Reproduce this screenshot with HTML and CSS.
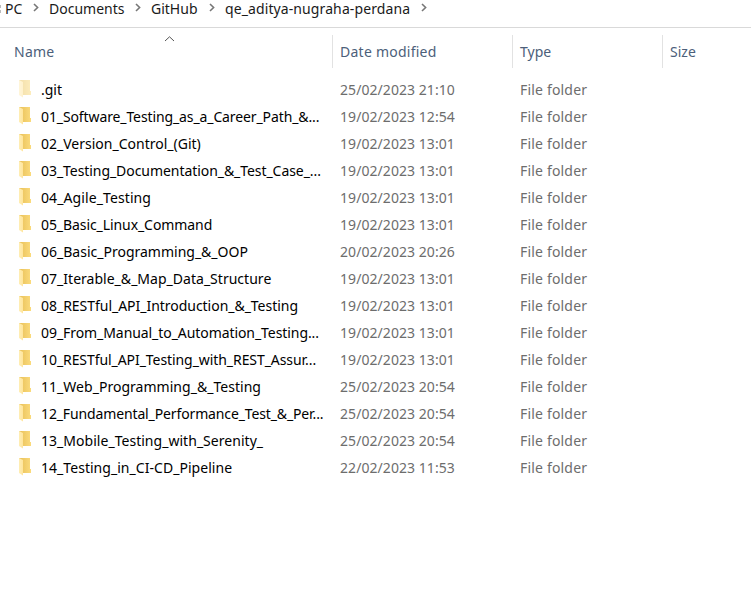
FILE: index.html
```
<!DOCTYPE html>
<html lang="en">
<head>
<meta charset="utf-8">
<title>qe_aditya-nugraha-perdana</title>
<link rel="stylesheet" href="styles.css">
</head>
<body>
<svg class="defs" aria-hidden="true">
  <defs>
    <linearGradient id="front" x1="0" x2="1"><stop offset="0" stop-color="#ffeeb5"/><stop offset="1" stop-color="#ffe59c"/></linearGradient>
    <linearGradient id="back" x1="0" x2="1"><stop offset="0.2" stop-color="#ecc55f"/><stop offset="1" stop-color="#fbdb7c"/></linearGradient>
    <symbol id="folder" viewBox="0 0 12 18">
      <path d="M0 0h11v11h1v4H0z" fill="url(#back)"/>
      <path d="M0 0l4 2v15.5L0 15z" fill="url(#front)"/>
    </symbol>
    <symbol id="chevron" viewBox="0 0 6 9"><path d="M1 1l3.6 3.5L1 8" fill="none" stroke="#777" stroke-width="1.6"/></symbol>
  </defs>
</svg>
<nav class="path">
  <span class="mark"></span>
  <span class="crumb pc">PC</span><svg class="chev"><use href="#chevron"/></svg>
  <span class="crumb documents">Documents</span><svg class="chev"><use href="#chevron"/></svg>
  <span class="crumb github">GitHub</span><svg class="chev"><use href="#chevron"/></svg>
  <span class="crumb repo">qe_aditya-nugraha-perdana</span><svg class="chev"><use href="#chevron"/></svg>
</nav>
<header class="columns">
  <div class="col first">Name<svg class="sort" viewBox="0 0 11 6"><path d="M1 5l4.5-4.2L10 5" fill="none" stroke="#555" stroke-width="1"/></svg></div>
  <div class="col date-head">Date modified</div>
  <div class="col">Type</div>
  <div class="col">Size</div>
</header>
<main class="files" id="files"></main>
<script src="files.js"></script>
</body>
</html>
```
FILE: styles.css
```
body {
  margin: 0;
  width: 751px;
  height: 612px;
  overflow: hidden;
  background: #fff;
  font: 14px/27px "Noto Sans", "Open Sans", sans-serif;
  color: #111;
}
.defs { position: absolute; width: 0; height: 0; }
.path {
  box-sizing: border-box;
  height: 28px;
  display: flex;
  align-items: flex-start;
  border-bottom: 1px solid #d9d9d9;
  white-space: nowrap;
}
.mark {
  width: 1px;
  height: 8px;
  margin: 5px 4px 0 0;
  background: linear-gradient(#bbb 3px, transparent 3px 5px, #bbb 5px);
}
.crumb { line-height: 18px; color: #1a1a1a; flex: none; }
.pc { width: 28px; }
.documents { width: 86px; }
.github { width: 58px; }
.repo { width: 196px; letter-spacing: .1px; }
.chev { width: 6px; height: 9px; margin: 3px 10px 0 0; flex: none; }
.columns {
  display: grid;
  grid-template-columns: 332px 180px 150px 89px;
  height: 32px;
  margin-top: 7px;
  line-height: 33px;
  color: #4c607a;
}
.col { border-left: 1px solid #e2e2e2; padding-left: 7px; }
.first { border: 0; padding-left: 14px; display: flex; }
.first, .date-head { letter-spacing: .25px; }
.sort { width: 11px; height: 6px; margin: 1px 157px 0 auto; }
.files { padding-top: 9px; }
.row {
  display: grid;
  grid-template-columns: 41px 299px 180px 150px;
  height: 27px;
  white-space: nowrap;
}
.icon { width: 12px; height: 18px; margin: 4px 0 0 19px; }
.hidden .icon { opacity: .5; }
.name { color: #000; }
.meta { color: #6d6d6d; }
.date { letter-spacing: .06px; }
.type { letter-spacing: .18px; }
```
FILE: files.js
```
// name, modified date, letter spacing in px
const files = [
  [".git", "25/02/2023 21:10", 0],
  ["01_Software_Testing_as_a_Career_Path_&...", "19/02/2023 12:54", -0.11],
  ["02_Version_Control_(Git)", "19/02/2023 13:01", 0],
  ["03_Testing_Documentation_&_Test_Case_...", "19/02/2023 13:01", -0.06],
  ["04_Agile_Testing", "19/02/2023 13:01", 0.1],
  ["05_Basic_Linux_Command", "19/02/2023 13:01", -0.08],
  ["06_Basic_Programming_&_OOP", "20/02/2023 20:26", 0],
  ["07_Iterable_&_Map_Data_Structure", "19/02/2023 13:01", 0.02],
  ["08_RESTful_API_Introduction_&_Testing", "19/02/2023 13:01", -0.03],
  ["09_From_Manual_to_Automation_Testing...", "19/02/2023 13:01", -0.07],
  ["10_RESTful_API_Testing_with_REST_Assur...", "19/02/2023 13:01", -0.07],
  ["11_Web_Programming_&_Testing", "25/02/2023 20:54", 0.03],
  ["12_Fundamental_Performance_Test_&_Per...", "25/02/2023 20:54", -0.13],
  ["13_Mobile_Testing_with_Serenity_", "25/02/2023 20:54", 0.03],
  ["14_Testing_in_CI-CD_Pipeline", "22/02/2023 11:53", 0.04]
];
const list = document.getElementById("files");
for (const [name, date, spacing] of files) {
  const row = document.createElement("div");
  row.className = name === ".git" ? "row hidden" : "row";
  row.innerHTML = '<svg class="icon"><use href="#folder"/></svg><span class="name"></span><span class="meta date"></span><span class="meta type">File folder</span>';
  const label = row.querySelector(".name");
  label.textContent = name;
  label.style.letterSpacing = spacing + "px";
  row.querySelector(".date").textContent = date;
  list.append(row);
}
```
